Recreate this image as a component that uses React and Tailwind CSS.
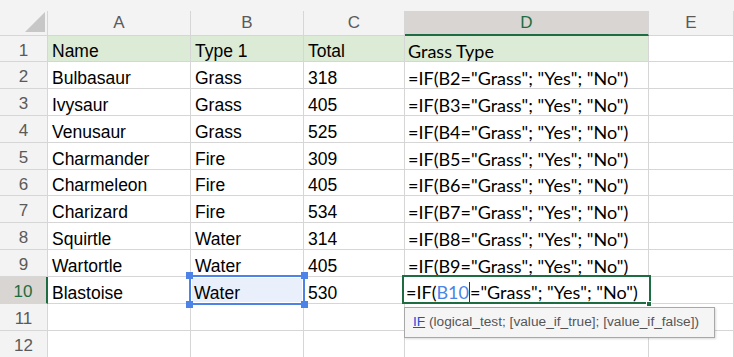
import React from 'react';

const cols = [
  { key: 'A', w: 'w-[143px]' },
  { key: 'B', w: 'w-[113px]' },
  { key: 'C', w: 'w-[101px]' },
  { key: 'D', w: 'w-[244px]' },
  { key: 'E', w: 'w-[85px]' },
];

const rows = [
  { n: 1, h: 'h-[26px]', cells: ['Name', 'Type 1', 'Total', 'Grass Type'] },
  { n: 2, h: 'h-[27px]', cells: ['Bulbasaur', 'Grass', '318'] },
  { n: 3, h: 'h-[27px]', cells: ['Ivysaur', 'Grass', '405'] },
  { n: 4, h: 'h-[27px]', cells: ['Venusaur', 'Grass', '525'] },
  { n: 5, h: 'h-[27px]', cells: ['Charmander', 'Fire', '309'] },
  { n: 6, h: 'h-[26px]', cells: ['Charmeleon', 'Fire', '405'] },
  { n: 7, h: 'h-[27px]', cells: ['Charizard', 'Fire', '534'] },
  { n: 8, h: 'h-[27px]', cells: ['Squirtle', 'Water', '314'] },
  { n: 9, h: 'h-[27px]', cells: ['Wartortle', 'Water', '405'] },
  { n: 10, h: 'h-[27px]', cells: ['Blastoise', 'Water', '530'] },
  { n: 11, h: 'h-[27px]', cells: [] },
  { n: 12, h: 'h-[27px]', cells: [] },
];

const formulaFont = "font-['Lato','Open_Sans',sans-serif]";

const Cell = ({ w, className = '', children }) => (
  <div className={`${w} shrink-0 h-full flex items-center pt-[6px] px-[4px] border-r border-b border-[#d6d6d6] whitespace-nowrap ${className}`}>
    {children}
  </div>
);

const ActiveFormula = () => (
  <div className="relative w-[244px] shrink-0 h-full border-r border-b border-[#d6d6d6]">
    <div className="absolute left-[-3px] top-[-2px] w-[249px] h-[29px] border-2 border-[#1e6c41] bg-white flex items-center pt-[5px] pl-[2px] whitespace-nowrap">
      <span className={`${formulaFont} text-[18px] text-black`}>
        =IF(<span className="text-[#4a86e8]">B10</span><span className="inline-block w-px h-[20px] bg-[#333] align-[-3px]"></span>="Grass"; "Yes"; "No")
      </span>
    </div>
    <div className="absolute right-[-4px] bottom-[-4px] w-[6px] h-[6px] bg-[#1e6c41] border border-white"></div>
    <div className="absolute left-[-1px] top-[30px] w-[311px] h-[31px] bg-[#f5f5f5] border border-[#a8a8a8] shadow-[1px_1px_2px_rgba(0,0,0,0.15)] flex items-center pl-[8px] z-10 whitespace-nowrap text-[13.7px] font-['Liberation_Sans',Arial,sans-serif]">
      <span className="text-[#1a4fd6] underline">IF</span>
      <span className="text-[#555]">&nbsp;(logical_test; [value_if_true]; [value_if_false])</span>
    </div>
  </div>
);

const SelectedB = ({ text }) => (
  <div className="relative w-[113px] shrink-0 h-full bg-[#e9effb] border-r border-b border-[#d6d6d6]">
    <div className="absolute left-[-2px] top-[-2px] w-[116px] h-[30px] border-2 border-[#4d83e6] z-10">
      <div className="w-full h-full border border-white"></div>
    </div>
    <div className="absolute left-[3px] top-0 h-full flex items-center pt-[6px] text-[17.5px] z-20">{text}</div>
    <div className="absolute left-[-5px] top-[-5px] w-[7px] h-[7px] bg-[#4d83e6] z-20"></div>
    <div className="absolute right-[-5px] top-[-5px] w-[7px] h-[7px] bg-[#4d83e6] z-20"></div>
    <div className="absolute left-[-5px] bottom-[-5px] w-[7px] h-[7px] bg-[#4d83e6] z-20"></div>
    <div className="absolute right-[-5px] bottom-[-5px] w-[7px] h-[7px] bg-[#4d83e6] z-20"></div>
  </div>
);

export default function App() {
  return (
    <div className="w-[734px] h-[357px] overflow-hidden bg-white font-['Liberation_Sans',Arial,sans-serif] text-black">
      {/* column headers */}
      <div className="flex items-end h-[36px] bg-[#f3f3f3]">
        <div className="w-[48px] shrink-0 h-[25px] border-r border-b border-[#d6d6d6]">
          <svg width="47" height="24" viewBox="0 0 47 24">
            <polygon points="25,21 45,1 45,21" fill="#c7c7c7" />
          </svg>
        </div>
        {cols.map((c) =>
          c.key === 'D' ? (
            <div key={c.key} className={`${c.w} shrink-0 h-[25px] bg-[#d8d5d2] border-r border-[#d6d6d6] border-b-2 border-b-[#1e6c41] flex items-center justify-center text-[17px] text-[#1e6c41]`}>
              {c.key}
            </div>
          ) : (
            <div key={c.key} className={`${c.w} shrink-0 h-[25px] border-r border-b border-[#d6d6d6] flex items-center justify-center text-[17px] text-[#5a5a5a]`}>
              {c.key}
            </div>
          )
        )}
      </div>

      {rows.map((r) => (
        <div key={r.n} className={`flex ${r.h}`}>
          {r.n === 10 ? (
            <div className="w-[48px] shrink-0 h-full bg-[#d8d5d2] border-r-2 border-r-[#1e6c41] border-b border-[#d6d6d6] flex items-center justify-center pt-[4px] text-[17px] text-[#1e6c41]">
              {r.n}
            </div>
          ) : (
            <div className="w-[48px] shrink-0 h-full bg-[#f3f3f3] border-r border-b border-[#d6d6d6] flex items-center justify-center pt-[4px] text-[17px] text-[#5a5a5a]">
              {r.n}
            </div>
          )}
          <Cell w="w-[143px]" className={`text-[17.5px] ${r.n === 1 ? 'bg-[#dcebd5]' : ''}`}>{r.cells[0]}</Cell>
          {r.n === 10 ? (
            <SelectedB text={r.cells[1]} />
          ) : (
            <Cell w="w-[113px]" className={`text-[17.5px] ${r.n === 1 ? 'bg-[#dcebd5]' : ''}`}>{r.cells[1]}</Cell>
          )}
          <Cell w="w-[101px]" className={`text-[17.5px] ${r.n === 1 ? 'bg-[#dcebd5]' : ''}`}>{r.cells[2]}</Cell>
          {r.n === 10 ? (
            <ActiveFormula />
          ) : (
            <Cell w="w-[244px]" className={`${formulaFont} text-[18px] pl-[3px] ${r.n === 1 ? 'bg-[#dcebd5]' : ''}`}>
              {r.n === 1 ? 'Grass Type' : r.n >= 2 && r.n <= 9 ? `=IF(B${r.n}="Grass"; "Yes"; "No")` : ''}
            </Cell>
          )}
          <Cell w="w-[85px]" />
        </div>
      ))}
    </div>
  );
}
